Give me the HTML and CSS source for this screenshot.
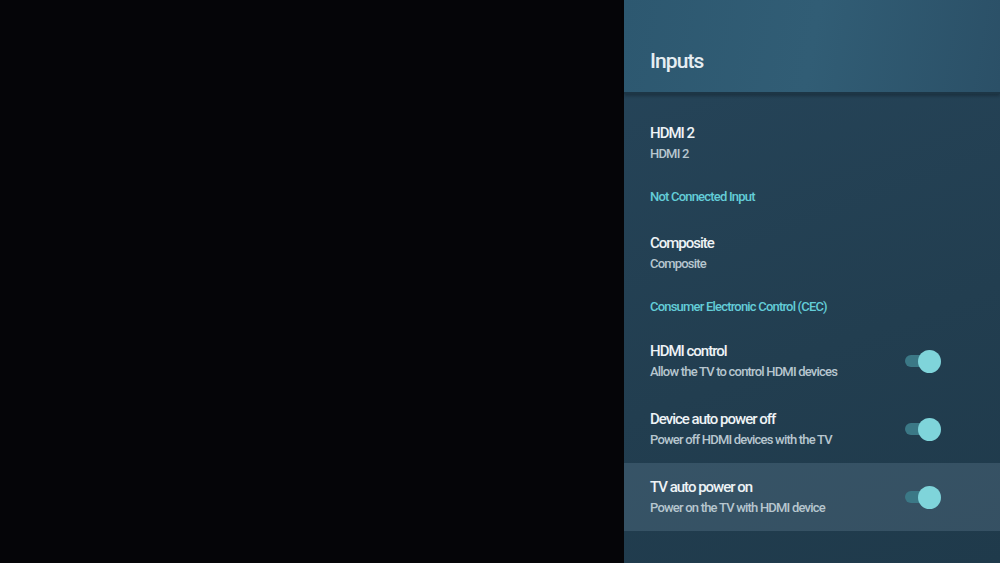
FILE: index.html
```html
<!DOCTYPE html>
<html>
<head>
<meta charset="utf-8">
<link rel="stylesheet" href="styles.css">
</head>
<body>
<div class="screen">
  <div class="video"></div>
  <aside class="panel">
    <header class="panel-header"><h1 class="panel-title">Inputs</h1></header>
    <div class="list">
      <div class="item">
        <div class="item-title">HDMI 2</div>
        <div class="item-sub">HDMI 2</div>
      </div>
      <div class="section">Not Connected Input</div>
      <div class="item">
        <div class="item-title">Composite</div>
        <div class="item-sub">Composite</div>
      </div>
      <div class="section section-tight">Consumer Electronic Control (CEC)</div>
      <div class="item item-toggle">
        <div class="item-text">
          <div class="item-title">HDMI control</div>
          <div class="item-sub">Allow the TV to control HDMI devices</div>
        </div>
        <span class="switch"><span class="knob"></span></span>
      </div>
      <div class="item item-toggle">
        <div class="item-text">
          <div class="item-title">Device auto power off</div>
          <div class="item-sub">Power off HDMI devices with the TV</div>
        </div>
        <span class="switch"><span class="knob"></span></span>
      </div>
      <div class="item item-toggle is-focused">
        <div class="item-text">
          <div class="item-title">TV auto power on</div>
          <div class="item-sub">Power on the TV with HDMI device</div>
        </div>
        <span class="switch"><span class="knob"></span></span>
      </div>
    </div>
  </aside>
</div>
</body>
</html>
```

FILE: styles.css
```css
* { box-sizing: border-box; margin: 0; padding: 0; }
html, body { width: 1000px; height: 563px; overflow: hidden; background: #050507; }
body { font-family: Roboto, "Noto Sans", sans-serif; }

.screen { display: flex; width: 1000px; height: 563px; }
.video { flex: 0 0 624px; background: #050508; }

.panel {
  flex: 1;
  display: flex;
  flex-direction: column;
  background: linear-gradient(160deg, #26455a 0%, #223e50 60%, #1f3a4b 100%);
}

.panel-header {
  height: 94px;
  padding: 47px 0 0 26px;
  background: linear-gradient(100deg, #2d5870 0%, #315d75 50%, #2b5067 100%);
  border-bottom: 2px solid #1d3646;
  box-shadow: 0 2px 3px rgba(0,0,0,0.25);
}
.panel-title {
  font-size: 21px;
  line-height: 28px;
  font-weight: 500;
  color: #e6eef2;
  letter-spacing: -0.9px;
}

.list { padding-top: 27px; display: flex; flex-direction: column; }

.item { padding: 0 0 0 26px; height: 45px; display: flex; flex-direction: column; justify-content: center; }
.item-title { font-size: 15px; font-weight: 500; color: #eef3f6; letter-spacing: -1px; line-height: 20px; }
.item-sub { font-size: 13px; font-weight: 500; color: #b7c6cf; letter-spacing: -0.8px; line-height: 21px; }

.section {
  padding: 23px 0 26px 26px;
  line-height: 16px;
  font-size: 13px;
  font-weight: 500;
  color: #63cdd8;
  letter-spacing: -0.8px;
}
.section-tight { padding-bottom: 12px; }

.item-toggle {
  flex-direction: row;
  align-items: center;
  justify-content: space-between;
  height: 68px;
  padding-right: 65px;
}
.item-toggle .item-text { padding-top: 2px; }
.item-toggle .item-sub { line-height: 22px; }
.is-focused { background: rgba(110, 140, 160, 0.28); }

.switch {
  position: relative;
  width: 30px;
  height: 12px;
  border-radius: 6px;
  background: #3b7886;
}
.knob {
  position: absolute;
  right: -6px;
  top: -5.5px;
  width: 23px;
  height: 23px;
  border-radius: 50%;
  background: #7fd4da;
}
```
